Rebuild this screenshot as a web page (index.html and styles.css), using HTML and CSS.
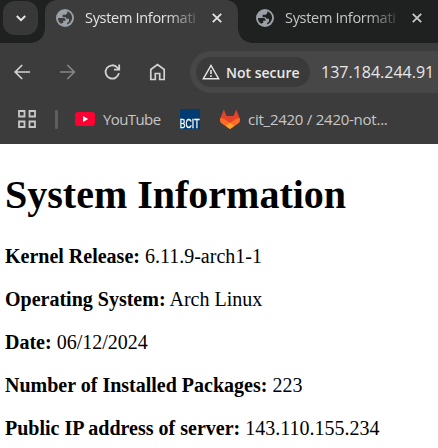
FILE: index.html
```html
<!DOCTYPE html>
<html lang="en">
<head>
<meta charset="utf-8">
<title>System Information</title>
<link rel="stylesheet" href="styles.css">
</head>
<body>
<svg class="defs" width="0" height="0">
  <symbol id="globe" viewBox="0 0 18 18">
    <circle cx="9" cy="9" r="9" fill="currentColor"/>
    <path fill="var(--hole)" d="M2 9h5.200c1.500 0 2.400.9 2.400 2.200v.5H7.200v2.200H5.700v1.200C3.400 14 2 11.800 2 9zM11.300 2.300c2.900.9 4.800 3.500 4.800 6.500 0 2.800-2.300 5.700-5 6.700v-1.600c1.300-.3 1.900-1.200 1.900-2.400V9.800h-1.500c-1 0-1.600-.6-1.600-1.600H6.600V5.800h2.100c1.500 0 2.600-1.100 2.600-2.600z"/>
  </symbol>
  <symbol id="close" viewBox="0 0 10 10">
    <path d="M.8.8l8.400 8.400M9.200.8L.8 9.200" fill="none" stroke="currentColor" stroke-width="1.800"/>
  </symbol>
</svg>

<header class="browser">
  <div class="tabs">
    <div class="search">
      <svg width="10" height="7" viewBox="0 0 10 7"><path d="M.8 1L5 5.200 9.200 1" fill="none" stroke="#e8e8e8" stroke-width="1.900"/></svg>
    </div>
    <div class="tab active">
      <svg class="globe" width="18" height="18"><use href="#globe"/></svg>
      <span class="title">System Informati</span>
      <svg class="close" width="10" height="10"><use href="#close"/></svg>
    </div>
    <div class="tab">
      <svg class="globe" width="18" height="18"><use href="#globe"/></svg>
      <span class="title">System Informati</span>
      <svg class="close" width="10" height="10"><use href="#close"/></svg>
    </div>
  </div>

  <nav class="toolbar">
    <svg class="nav" width="18" height="18" viewBox="0 0 18 18"><path d="M17 9H2.500M9.200 2L2.200 9l7 7" fill="none" stroke="#d2d2d2" stroke-width="1.700"/></svg>
    <svg class="nav" width="18" height="18" viewBox="0 0 18 18"><path d="M2 9h14.500M9.300 2l7 7-7 7" fill="none" stroke="#858585" stroke-width="1.700"/></svg>
    <svg class="nav" width="18" height="18" viewBox="0 0 18 18"><path d="M15.900 10.200A6.700 6.700 0 1 1 14.300 4.500L16 6.300M16.200 1.500V6.600H11" fill="none" stroke="#d2d2d2" stroke-width="1.800"/></svg>
    <svg class="nav" width="18" height="18" viewBox="0 0 18 18"><path d="M2.800 6.500L9.500 1.500l6.700 5v10h-4.500v-6H7.300v6H2.800z" fill="none" stroke="#d2d2d2" stroke-width="1.700"/></svg>
    <div class="omnibox">
      <div class="chip">
        <svg width="18" height="16" viewBox="0 0 18 16"><path d="M9 1.500L16.600 14.700H1.400z" fill="none" stroke="#e3e3e3" stroke-width="1.500"/><path d="M9 6v4M9 11.200v1.800" stroke="#e3e3e3" stroke-width="1.600"/></svg>
        <span>Not secure</span>
      </div>
      <span class="url">137.184.244.91</span>
    </div>
  </nav>

  <div class="bookmarks">
    <svg class="apps" width="18" height="18" viewBox="0 0 18 18"><path d="M1 1h5.500v5.500H1zM11.500 1H17v5.500h-5.500zM1 11.500h5.500V17H1zM11.500 11.500H17V17h-5.500z" fill="none" stroke="#c7c7c7" stroke-width="1.800"/></svg>
    <i class="divider"></i>
    <svg class="youtube" width="20" height="14" viewBox="0 0 20 14"><rect width="20" height="14" rx="3.200" fill="#ff0033"/><path d="M8 4l5.200 3L8 10z" fill="#fff"/></svg>
    <span class="label yt-label">YouTube</span>
    <div class="bcit"><span>BCIT</span></div>
    <svg class="gitlab" width="20" height="20" viewBox="0 0 20 20">
      <path d="M3.800.4L6.600 7h6.800L16.200.4 19.600 9c.8 2.400.1 4.300-1.600 5.500L10 20l-8-5.500C.3 13.300-.4 11.400.4 9z" fill="#e24329"/>
      <path d="M.4 9c2.200.2 4.200 1.100 6 2.500L10 14l3.600-2.500c1.800-1.400 3.800-2.300 6-2.500.8 2.400.1 4.300-1.600 5.500L10 20l-8-5.500C.3 13.300-.4 11.400.4 9z" fill="#fc6d26"/>
      <path d="M10 13.700l4.300 3.200L10 20l-4.300-3.100z" fill="#fca326"/>
    </svg>
    <span class="label repo-label">cit_2420 / 2420-not...</span>
  </div>
</header>

<main>
  <h1>System Information</h1>
  <p><strong>Kernel Release:</strong> 6.11.9-arch1-1</p>
  <p><strong>Operating System:</strong> Arch Linux</p>
  <p><strong>Date:</strong> 06/12/2024</p>
  <p><strong>Number of Installed Packages:</strong> 223</p>
  <p><strong>Public IP address of server:</strong> 143.110.155.234</p>
</main>
</body>
</html>
```
FILE: styles.css
```css
* { box-sizing: border-box; }
html, body { margin: 0; background: #fff; overflow: hidden; }
svg { display: block; flex: none; }
.defs { position: absolute; }

.browser {
  height: 144px;
  background: #3c3c3c;
  font-family: "Open Sans", "Noto Sans", sans-serif;
  white-space: nowrap;
}

.tabs { display: flex; height: 43px; background: #1f2120; }
.search {
  display: flex;
  align-items: center;
  justify-content: center;
  flex: none;
  width: 35px;
  height: 34px;
  margin: 1px 7px 0 3px;
  border-radius: 12px;
  background: #383838;
}
.tab {
  --hole: #1f2120;
  position: relative;
  display: flex;
  align-items: center;
  flex: none;
  width: 193px;
  padding: 0 0 7px 11px;
  color: #c4c7c5;
}
.tab + .tab { margin-left: 7px; }
.tab.active {
  --hole: #3c3c3c;
  background: #3c3c3c;
  border-radius: 12px 12px 0 0;
  color: #e3e3e3;
}
.tab.active::before,
.tab.active::after {
  content: "";
  position: absolute;
  bottom: 0;
  width: 14px;
  height: 14px;
}
.tab.active::before { left: -14px; background: radial-gradient(circle at 0 0, transparent 13.500px, #3c3c3c 14px); }
.tab.active::after { right: -14px; background: radial-gradient(circle at 100% 0, transparent 13.500px, #3c3c3c 14px); }
.globe { color: #9aa0a6; }
.title {
  width: 114px;
  margin-left: 11px;
  font-size: 14.500px;
  line-height: 20px;
  letter-spacing: -.3px;
  -webkit-mask-image: linear-gradient(90deg, #000 82px, rgba(0, 0, 0, .15) 113px);
  mask-image: linear-gradient(90deg, #000 82px, rgba(0, 0, 0, .15) 113px);
}
.close { margin-left: 13px; }

.toolbar { display: flex; align-items: center; height: 58px; padding-left: 13px; }
.nav { margin-right: 27px; }
.omnibox {
  display: flex;
  align-items: center;
  flex: none;
  width: 248px;
  height: 42px;
  margin-left: -3px;
  padding-left: 6px;
  border-radius: 21px 0 0 21px;
  background: #474747;
}
.chip {
  display: flex;
  align-items: center;
  width: 114px;
  height: 30px;
  padding-left: 6px;
  border-radius: 15px;
  background: #3a3a3a;
  color: #e8e8e8;
  font-size: 14px;
  font-weight: 600;
}
.chip span { margin-left: 6px; }
.url { margin-left: 11px; color: #e8e8e8; font-size: 16px; }

.bookmarks { display: flex; align-items: center; height: 36px; padding-left: 18px; }
.divider { width: 3px; height: 19px; margin-left: 19px; border-radius: 1px; background: #5e5e5e; }
.youtube { margin-left: 17px; }
.label { color: #c7c7c7; font-size: 15px; line-height: 20px; }
.yt-label { width: 77px; margin-left: 8px; letter-spacing: -.6px; }
.bcit {
  display: flex;
  align-items: flex-end;
  justify-content: center;
  width: 20px;
  height: 20px;
  background: #003c71;
  color: #fff;
  font: 12px/9px "Liberation Sans", sans-serif;
}
.bcit span { transform: scaleX(.72); -webkit-text-stroke: .3px #fff; }
.gitlab { margin-left: 20px; }
.repo-label { margin-left: 8px; letter-spacing: -.25px; }

main { padding: 0 5px; color: #000; font: 20px/23px "Liberation Serif", "Times New Roman", serif; }
h1 { margin: 0; padding-top: 28px; font-size: 40px; line-height: 46px; }
p { margin: 20px 0 0; }
h1 + p { margin-top: 27px; }
```
